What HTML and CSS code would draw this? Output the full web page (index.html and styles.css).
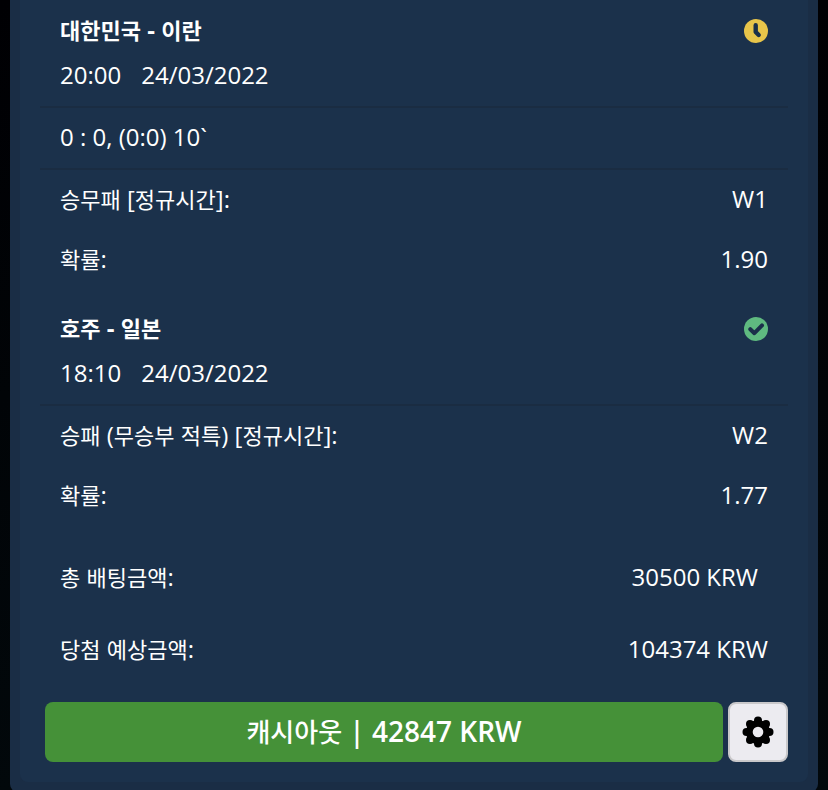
FILE: index.html
```
<!DOCTYPE html>
<html lang="ko">
<head>
  <meta charset="UTF-8" />
  <meta name="viewport" content="width=device-width, initial-scale=1.0" />
  <title>베팅 내역</title>
  <link rel="stylesheet" href="styles.css">
</head>
<body>
  <main class="coupon">
    <div class="coupon-body">
      <section class="event">
        <div class="event-head">
          <h2><span class="ko">대한민국</span> - <span class="ko">이란</span></h2>
          <svg class="status" viewBox="0 0 24 24" role="img" aria-label="진행중">
            <circle cx="12" cy="12" r="12" fill="#e8c54a" />
            <path d="M11.7 6.2v6.8l3 3" fill="none" stroke="#1b304a" stroke-width="4.4" stroke-linecap="round" stroke-linejoin="round" />
          </svg>
        </div>
        <div class="event-time"><time>20:00</time><time>24/03/2022</time></div>
        <div class="event-score">0 : 0, (0:0) 10`</div>
        <dl class="rows">
          <div class="row"><dt><span class="ko">승무패</span> [<span class="ko">정규시간</span>]:</dt><dd>W1</dd></div>
          <div class="row"><dt><span class="ko">확률</span>:</dt><dd>1.90</dd></div>
        </dl>
      </section>

      <section class="event">
        <div class="event-head">
          <h2><span class="ko">호주</span> - <span class="ko">일본</span></h2>
          <svg class="status" viewBox="0 0 24 24" role="img" aria-label="적중">
            <circle cx="12" cy="12" r="12" fill="#5fba80" />
            <path d="M6.3 12.2l4.1 4 7.6-7.8" fill="none" stroke="#1b304a" stroke-width="4" stroke-linecap="round" stroke-linejoin="round" />
          </svg>
        </div>
        <div class="event-time"><time>18:10</time><time>24/03/2022</time></div>
        <dl class="rows">
          <div class="row"><dt><span class="ko">승패</span> (<span class="ko">무승부</span> <span class="ko">적특</span>) [<span class="ko">정규시간</span>]:</dt><dd>W2</dd></div>
          <div class="row"><dt><span class="ko">확률</span>:</dt><dd>1.77</dd></div>
        </dl>
      </section>

      <dl class="totals">
        <div class="row"><dt><span class="ko">총</span> <span class="ko">배팅금액</span>:</dt><dd class="stake">30500 KRW</dd></div>
        <div class="row"><dt><span class="ko">당첨</span> <span class="ko">예상금액</span>:</dt><dd>104374 KRW</dd></div>
      </dl>

      <div class="actions">
        <button type="button" class="cashout"><span class="cashout-label">캐시아웃</span> | 42847 KRW</button>
        <button type="button" class="settings" aria-label="설정">
          <svg viewBox="0 0 32 32">
            <g fill="#000">
              <circle cx="16" cy="16" r="12" />
              <circle cx="16" cy="4.5" r="4" />
              <circle cx="16" cy="27.5" r="4" />
              <circle cx="4.5" cy="16" r="4" />
              <circle cx="27.5" cy="16" r="4" />
              <circle cx="8" cy="8" r="4" />
              <circle cx="24" cy="8" r="4" />
              <circle cx="8" cy="24" r="4" />
              <circle cx="24" cy="24" r="4" />
            </g>
            <circle cx="16" cy="16" r="5.3" fill="#ecebf0" />
          </svg>
        </button>
      </div>
    </div>
  </main>
</body>
</html>
```
FILE: styles.css
```
:root {
  --panel: #1a2d45;
  --card: #1b314b;
  --line: #1a2c42;
  --text: #ffffff;
}

* {
  box-sizing: border-box;
}

body {
  margin: 0;
  padding: 0 10px;
  font-family: 'Open Sans', 'Noto Sans CJK KR', sans-serif;
  font-size: 24px;
  line-height: 32px;
  color: var(--text);
  background: linear-gradient(#000003, #02080b);
}

h2, dl, dt, dd {
  margin: 0;
}

/* hangul glyphs run larger than the latin ones */
.ko {
  font-size: 22px;
}

.coupon {
  padding: 0 10px 10px;
  background: var(--panel);
  border-radius: 0 0 8px 8px;
}

.coupon-body {
  padding: 8px 20px 20px;
  background: var(--card);
  border-radius: 0 0 8px 8px;
}

.event {
  margin-bottom: 16px;
}

.event-head {
  display: flex;
  align-items: center;
  justify-content: space-between;
  height: 46px;
  padding: 0 20px;
}

.event-head h2 {
  padding-bottom: 2px;
  font-size: 24px;
  font-weight: 700;
}

.status {
  width: 24px;
  height: 24px;
}

.event-time {
  display: flex;
  gap: 20px;
  padding: 5px 20px 15px;
  border-bottom: 2px solid var(--line);
}

.event-score {
  padding: 13px 20px 15px;
  border-bottom: 2px solid var(--line);
}

.row {
  display: flex;
  align-items: center;
  justify-content: space-between;
  height: 60px;
  padding: 0 20px 2px;
}

.totals .row {
  height: 72px;
}

.totals .stake {
  padding-right: 10px;
}

.actions {
  display: flex;
  gap: 5px;
  padding: 16px 0 0 5px;
}

.actions button {
  height: 60px;
  border-radius: 8px;
  font-family: inherit;
  cursor: pointer;
}

.cashout {
  flex: 1;
  padding: 0 6px 2px;
  border: none;
  color: var(--text);
  background: #459138;
  font-size: 28px;
  font-weight: 600;
}

.cashout-label {
  font-size: 26px;
  font-weight: 500;
}

.settings {
  display: flex;
  align-items: center;
  justify-content: center;
  width: 60px;
  padding: 0;
  border: 2px solid #c9c8ca;
  background: #ecebf0;
}

.settings svg {
  width: 32px;
  height: 32px;
}
```
